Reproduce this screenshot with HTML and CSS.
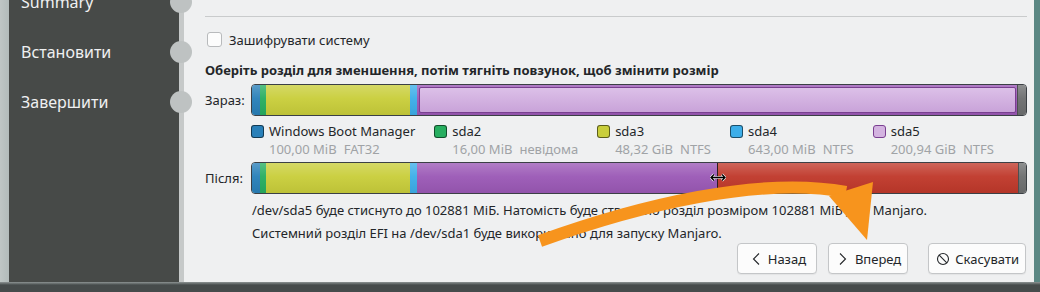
FILE: index.html
```html
<!DOCTYPE html>
<html lang="uk">
<head>
    <meta charset="UTF-8">
    <meta name="viewport" content="width=device-width, initial-scale=1.0">
    <title>Встановлення Manjaro</title>
    <link rel="stylesheet" href="styles.css">
</head>
<body>
    <div class="window">
        <div class="sidebar">
            <ul class="steps">
                <li>Summary</li>
                <li>Встановити</li>
                <li>Завершити</li>
            </ul>
        </div>

        <div class="page">
            <div class="separator"></div>

            <label class="check-row">
                <span class="checkbox"></span>
                Зашифрувати систему
            </label>

            <div class="instruction">Оберіть розділ для зменшення, потім тягніть повзунок, щоб змінити розмір</div>

            <!-- поточна розмітка -->
            <div class="bar-row">
                <span class="bar-label">Зараз:</span>
                <div class="bar">
                    <div class="seg sda1" style="width:8px"></div>
                    <div class="seg sda2" style="width:6px"></div>
                    <div class="seg sda3" style="width:144px"></div>
                    <div class="seg sda4" style="width:7px"></div>
                    <div class="seg sda5 selected" style="width:600px"><span class="sel-box"></span></div>
                    <div class="seg free"></div>
                </div>
            </div>

            <div class="legend">
                <div class="legend-item">
                    <span class="swatch sda1"></span>
                    <span class="name">Windows Boot Manager</span>
                    <span class="details"><span>100,00 MiB</span><span>FAT32</span></span>
                </div>
                <div class="legend-item">
                    <span class="swatch sda2"></span>
                    <span class="name">sda2</span>
                    <span class="details"><span>16,00 MiB</span><span>невідома</span></span>
                </div>
                <div class="legend-item">
                    <span class="swatch sda3"></span>
                    <span class="name">sda3</span>
                    <span class="details"><span>48,32 GiB</span><span>NTFS</span></span>
                </div>
                <div class="legend-item">
                    <span class="swatch sda4"></span>
                    <span class="name">sda4</span>
                    <span class="details"><span>643,00 MiB</span><span>NTFS</span></span>
                </div>
                <div class="legend-item">
                    <span class="swatch sda5-light"></span>
                    <span class="name">sda5</span>
                    <span class="details"><span>200,94 GiB</span><span>NTFS</span></span>
                </div>
            </div>

            <!-- розмітка після змін -->
            <div class="bar-row after">
                <span class="bar-label">Після:</span>
                <div class="bar">
                    <div class="seg sda1" style="width:8px"></div>
                    <div class="seg sda2" style="width:6px"></div>
                    <div class="seg sda3" style="width:144px"></div>
                    <div class="seg sda4" style="width:7px"></div>
                    <div class="seg sda5" style="width:300px"></div>
                    <div class="seg new-part" style="width:301px">
                        <svg class="resize-cursor" width="16" height="9" viewBox="0 0 16 9">
                            <path d="M1 4.5h14M4 1.5L1 4.5l3 3M12 1.5l3 3-3 3" fill="none" stroke="#fff" stroke-width="2.6"/>
                            <path d="M1 4.5h14M4 1.5L1 4.5l3 3M12 1.5l3 3-3 3" fill="none" stroke="#000" stroke-width="1.3"/>
                        </svg>
                    </div>
                    <div class="seg free"></div>
                </div>
            </div>

            <p class="info first">/dev/sda5 буде стиснуто до 102881 МіБ. Натомість буде створено розділ розміром 102881 МіБ для Manjaro.</p>
            <p class="info">Системний розділ EFI на /dev/sda1 буде використано для запуску Manjaro.</p>

            <div class="buttons">
                <button class="btn">
                    <svg width="16" height="16" viewBox="0 0 16 16"><path d="M11 2.5L5.5 8l5.5 5.5" fill="none" stroke="#232629" stroke-width="1.1"/></svg>
                    Назад
                </button>
                <button class="btn">
                    <svg width="16" height="16" viewBox="0 0 16 16"><path d="M5 2.5L10.5 8 5 13.5" fill="none" stroke="#232629" stroke-width="1.1"/></svg>
                    Вперед
                </button>
                <button class="btn cancel">
                    <svg width="16" height="16" viewBox="0 0 16 16"><circle cx="8" cy="8" r="5.5" fill="none" stroke="#232629" stroke-width="1.1"/><path d="M4.2 4.2l7.6 7.6" stroke="#232629" stroke-width="1.1"/></svg>
                    Скасувати
                </button>
            </div>
        </div>
    </div>

    <!-- стрілка-підказка поверх вікна -->
    <svg class="annotation" width="1040" height="292" viewBox="0 0 1040 292">
        <path d="M540 241 C640 205 760 176 846 192" fill="none" stroke="#f7941d" stroke-width="12"/>
        <polygon points="829,196 873,182 867,240" fill="#f7941d"/>
    </svg>
</body>
</html>
```

FILE: styles.css
```css
* {
    box-sizing: border-box;
}
html, body {
    margin: 0;
}
body {
    position: relative;
    width: 1040px;
    height: 292px;
    overflow: hidden;
    font-family: "Noto Sans", "Open Sans", sans-serif;
    font-size: 13px;
    line-height: 18px;
    color: #232629;
    background:
        linear-gradient(to bottom, transparent 282px, #8d9494 282px, #464b4b 285px),
        linear-gradient(to right, #bfc6c5 0, #b2bbba 9px, #5b8783 1034px);
}
.window {
    display: flex;
    width: 1025px;
    height: 282px;
    margin-left: 9px;
}
.sidebar {
    width: 175px;
    background-color: #474a48;
    border-right: 5px solid #c6c9c9;
}
.steps {
    list-style: none;
    margin: -23px 0 0;
    padding: 0;
}
.steps li {
    position: relative;
    height: 50px;
    line-height: 50px;
    padding-left: 12px;
    font-size: 16px;
    color: #eff0f1;
}
.steps li::after {
    content: "";
    position: absolute;
    left: 161px;
    top: 14px;
    width: 22px;
    height: 22px;
    border-radius: 50%;
    background-color: #bec2c2;
}
.page {
    flex: 1;
    display: flex;
    flex-direction: column;
    background-color: #eff0f1;
    padding: 16px 7px 0 21px;
}
.separator {
    flex: none;
    height: 1px;
    background-color: #c9cbcc;
}
.check-row {
    flex: none;
    display: flex;
    align-items: center;
    gap: 7px;
    height: 15px;
    margin: 15px 0 0 2px;
}
.checkbox {
    width: 15px;
    height: 15px;
    border: 1px solid #b8babc;
    border-radius: 3px;
    background-color: #fcfcfc;
}
.instruction {
    flex: none;
    height: 18px;
    font-weight: bold;
    margin-top: 14px;
}
.bar-row {
    flex: none;
    display: grid;
    grid-template-columns: 46px 1fr;
    align-items: center;
    height: 32px;
    margin-top: 5px;
}
.bar-row.after {
    margin-top: 4px;
}
.bar {
    display: flex;
    height: 32px;
    border: 1px solid #3b4045;
    border-radius: 4px;
    overflow: hidden;
}
.seg {
    position: relative;
    height: 100%;
    background-image: linear-gradient(rgba(255,255,255,0.22), rgba(255,255,255,0.04) 45%, rgba(0,0,0,0.06));
}
.sda1 { background-color: #2980b9; }
.sda2 { background-color: #27ae60; }
.sda3 { background-color: #c9ce3b; }
.sda4 { background-color: #3daee9; }
.sda5 { background-color: #9b59b6; }
.new-part {
    background-color: #c0392b;
    border-left: 1px solid #2b1f1f;
}
.free {
    flex: 1;
    background-color: #6d6f70;
    border-left: 1px solid #4d4f50;
}
.selected {
    padding: 2px 1px 2px 2px;
}
.sel-box {
    display: block;
    height: 100%;
    border: 1px solid #7a3f91;
    border-radius: 2px;
    background: linear-gradient(#dcc0e8, #c9a3d9);
}
.resize-cursor {
    position: absolute;
    left: -8px;
    top: 10px;
}
.legend {
    flex: none;
    display: flex;
    gap: 19px;
    height: 36px;
    margin: 6px 0 0 46px;
}
.legend-item {
    display: grid;
    grid-template-columns: 18px auto;
    grid-template-rows: 18px 18px;
    align-items: center;
}
.swatch {
    width: 13px;
    height: 13px;
    border: 1px solid rgba(0,0,0,0.55);
    border-radius: 3px;
}
.sda5-light {
    background-color: #d3b3e0;
    border-color: #7a3f91;
}
.details {
    grid-column: 2;
    color: #a0a3a6;
}
.details span + span {
    margin-left: 7px;
}
.info {
    flex: none;
    height: 18px;
    margin: 5px 0 0;
    padding-left: 47px;
}
.info.first {
    margin-top: 7px;
}
.buttons {
    flex: none;
    display: flex;
    justify-content: flex-end;
    gap: 11px;
    margin-top: 1px;
    padding-right: 1px;
}
.btn {
    display: inline-flex;
    align-items: center;
    justify-content: center;
    gap: 4px;
    min-width: 80px;
    height: 31px;
    padding: 0 6px;
    font: inherit;
    color: #232629;
    background-color: #fcfcfc;
    border: 1px solid #c4c6c8;
    border-radius: 4px;
    box-shadow: 0 1px 1px rgba(0,0,0,0.05);
}
.btn.cancel {
    margin-left: 9px;
}
.annotation {
    position: absolute;
    left: 0;
    top: 0;
    pointer-events: none;
}
```
